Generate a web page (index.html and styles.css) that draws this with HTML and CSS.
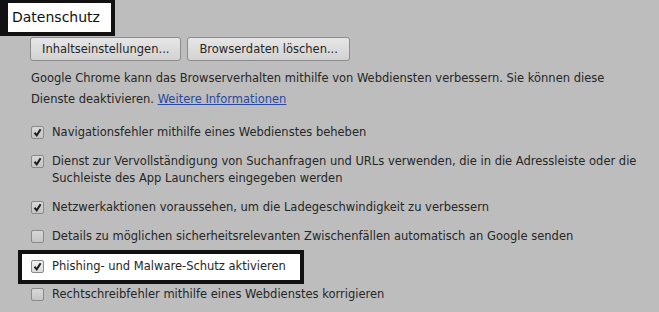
FILE: index.html
```html
<!DOCTYPE html>
<html lang="de">
<head>
<meta charset="UTF-8">
<meta name="viewport" content="width=device-width, initial-scale=1.0">
<title>Datenschutz</title>
<link rel="stylesheet" href="styles.css">
</head>
<body>
    <h2 class="section-title">Datenschutz</h2>

    <div class="section-body">
        <div class="buttons">
            <button class="btn">Inhaltseinstellungen...</button>
            <button class="btn">Browserdaten löschen...</button>
        </div>

        <p class="intro">
            Google Chrome kann das Browserverhalten mithilfe von Webdiensten verbessern. Sie können diese<br>
            Dienste deaktivieren. <a href="#">Weitere Informationen</a>
        </p>

        <div class="option">
            <span class="box checked"><svg viewBox="0 0 13 13"><path d="M3 6.8 L5.6 9.8 L10.2 2.6" /></svg></span>
            <span class="label">Navigationsfehler mithilfe eines Webdienstes beheben</span>
        </div>
        <div class="option">
            <span class="box checked"><svg viewBox="0 0 13 13"><path d="M3 6.8 L5.6 9.8 L10.2 2.6" /></svg></span>
            <span class="label">Dienst zur Vervollständigung von Suchanfragen und URLs verwenden, die in die Adressleiste oder die<br>Suchleiste des App Launchers eingegeben werden</span>
        </div>
        <div class="option">
            <span class="box checked"><svg viewBox="0 0 13 13"><path d="M3 6.8 L5.6 9.8 L10.2 2.6" /></svg></span>
            <span class="label">Netzwerkaktionen voraussehen, um die Ladegeschwindigkeit zu verbessern</span>
        </div>
        <div class="option">
            <span class="box"></span>
            <span class="label">Details zu möglichen sicherheitsrelevanten Zwischenfällen automatisch an Google senden</span>
        </div>
        <div class="option marked">
            <span class="box checked"><svg viewBox="0 0 13 13"><path d="M3 6.8 L5.6 9.8 L10.2 2.6" /></svg></span>
            <span class="label">Phishing- und Malware-Schutz aktivieren</span>
        </div>
        <div class="option">
            <span class="box"></span>
            <span class="label">Rechtschreibfehler mithilfe eines Webdienstes korrigieren</span>
        </div>
    </div>
</body>
</html>
```

FILE: styles.css
```css
body {
    margin: 0;
    background-color: #bdbdbd;
    font-family: "DejaVu Sans", Verdana, sans-serif;
    font-size: 11.5px;
    color: #262626;
}
.section-title {
    display: inline-block;
    margin: 0;
    padding: 5px 11px 6px 4px;
    border: 4px solid #111;
    border-left-width: 8px;
    border-top-width: 3px;
    background-color: #fff;
    font-size: 14px;
    font-weight: normal;
    line-height: 18px;
    color: #111;
}
.section-body {
    padding: 1px 0 0 30px;
}
.buttons {
    display: flex;
    gap: 6px;
}
.btn {
    height: 24px;
    padding: 0 11px;
    border: 1px solid #8c8c8c;
    border-radius: 3px;
    background: linear-gradient(#e6e6e6, #d2d2d2);
    font-family: inherit;
    font-size: 11.5px;
    color: #262626;
}
.intro {
    margin: 7px 0 8px 1px;
    line-height: 21px;
}
.intro a {
    color: #2848a6;
}
.option {
    display: flex;
    align-items: flex-start;
    gap: 8px;
    padding: 6px 0 6px 1px;
    line-height: 17px;
}
.box {
    flex: none;
    width: 11px;
    height: 11px;
    margin-top: 2px;
    border: 1px solid #8a8a8a;
    border-radius: 2px;
    background: linear-gradient(#d8d8d8, #c4c4c4);
}
.box svg {
    display: block;
    width: 11px;
    height: 11px;
}
.box path {
    fill: none;
    stroke: #1e1e1e;
    stroke-width: 2.4;
}
/* Markierung um die Phishing-Option */
.marked {
    width: fit-content;
    margin: 3px 0 0 -8px;
    padding: 4px 14px 5px 9px;
    background-color: #fff;
    outline: 4px solid #111;
}
.marked .box {
    background: linear-gradient(#f0f0f0, #dcdcdc);
}
```
